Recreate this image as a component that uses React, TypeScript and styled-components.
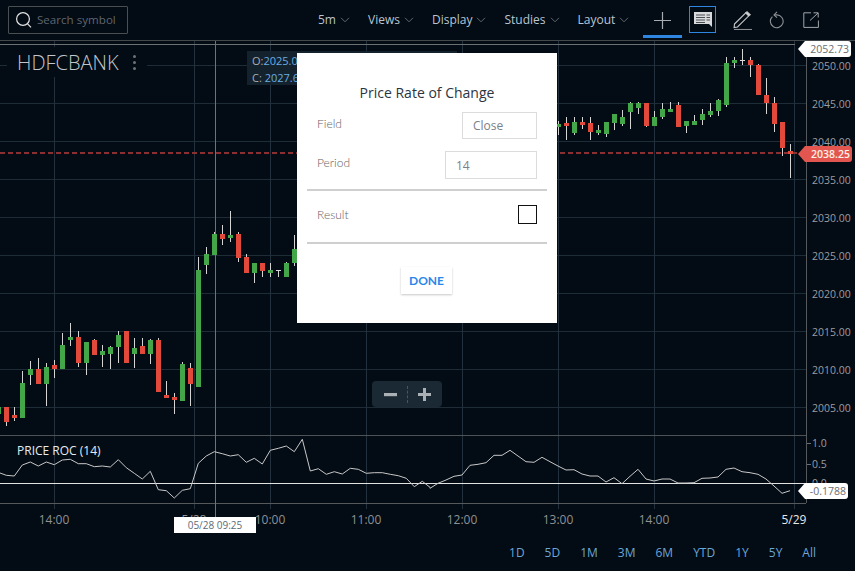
import React from "react";
import styled, { createGlobalStyle } from "styled-components";

const Global = createGlobalStyle`
  html, body { margin: 0; padding: 0; background: #030b14; overflow: hidden; }
  * { box-sizing: border-box; }
`;

const Page = styled.div`
  width: 855px;
  height: 571px;
  display: flex;
  flex-direction: column;
  background: #030b14;
  font-family: "Open Sans", "Liberation Sans", sans-serif;
`;

const Toolbar = styled.header`
  height: 40px;
  display: flex;
  align-items: center;
  padding-left: 8px;
  flex: none;
`;

const SearchBox = styled.div`
  width: 120px;
  height: 28px;
  margin-top: -1px;
  border: 1px solid #4a4f52;
  border-radius: 1px;
  display: flex;
  align-items: center;
  padding-left: 6px;
  gap: 4px;
  color: #5e6670;
  font-size: 11.6px;
`;

const Menu = styled.nav`
  margin-left: 190px;
  display: flex;
  align-items: center;
  gap: 18px;
  margin-top: -1px;
`;

const MenuItem = styled.div`
  display: flex;
  align-items: center;
  gap: 4px;
  font-size: 12px;
  color: #b9c6d2;
`;

const Tools = styled.div`
  margin-left: 14px;
  display: flex;
  align-items: center;
  height: 40px;
`;

const CrossTool = styled.div`
  width: 39px;
  height: 29px;
  margin-top: 6px;
  border-bottom: 3px solid #2e86e0;
  display: flex;
  align-items: center;
  justify-content: center;
  padding-bottom: 2px;
`;

const NoteTool = styled.div`
  width: 27px;
  height: 27px;
  margin: -1px 0 0 7px;
  border: 1px solid #2e86e0;
  display: flex;
  align-items: center;
  justify-content: center;
`;

const PlainTool = styled.div<{ $gap: number }>`
  margin-left: ${(p) => p.$gap}px;
  display: flex;
  align-items: center;
  justify-content: center;
`;

const ChartArea = styled.main`
  position: relative;
  height: 493px;
  flex: none;
  overflow: hidden;
`;

const ChartSvg = styled.svg`
  display: block;
  width: 855px;
  height: 493px;
`;

const AxisText = styled.text<{ $bright?: boolean }>`
  font-family: "Open Sans", "Liberation Sans", sans-serif;
  font-size: 10.5px;
  fill: ${(p) => (p.$bright ? "#e8e8e8" : "#9a9ea2")};
`;

const TimeText = styled.text<{ $bright?: boolean }>`
  font-family: "Open Sans", "Liberation Sans", sans-serif;
  font-size: 12px;
  text-anchor: middle;
  fill: ${(p) => (p.$bright ? "#e8e8e8" : "#8e9296")};
`;

const Symbol = styled.div`
  position: absolute;
  left: 7px;
  top: 7px;
  width: 140px;
  height: 30px;
  padding-left: 10px;
  background: #030b14;
  display: flex;
  align-items: center;
  gap: 14px;
  color: #c2c6ca;
  font-size: 20px;
  font-weight: 300;
`;

const Dots = styled.span`
  display: flex;
  flex-direction: column;
  gap: 3px;
  & i {
    display: block;
    width: 3px;
    height: 3px;
    border-radius: 50%;
    background: #6d7276;
  }
`;

const Study = styled.div`
  position: absolute;
  left: 17px;
  top: 402px;
  font-size: 12px;
  color: #e6ecf2;
`;

const Ohlc = styled.div`
  position: absolute;
  left: 247px;
  top: 11px;
  width: 210px;
  height: 34px;
  padding: 1px 0 0 5px;
  background: #14222e;
  font-size: 11px;
  line-height: 17px;
  color: #a6adb4;
`;

const OhlcValue = styled.span`
  color: #68aee4;
`;

const Flag = styled.div<{ $top: number; $width: number; $red?: boolean }>`
  position: absolute;
  left: 805px;
  top: ${(p) => p.$top}px;
  width: ${(p) => p.$width}px;
  height: 16px;
  border-radius: 0 3px 3px 0;
  background: ${(p) => (p.$red ? "#e2564f" : "#ffffff")};
  color: ${(p) => (p.$red ? "#fdf2e8" : "#6a6e72")};
  font-size: 10.5px;
  font-weight: ${(p) => (p.$red ? 600 : 400)};
  line-height: 17px;
  text-align: right;
  padding-right: 2px;
  &::before {
    content: "";
    position: absolute;
    left: -7px;
    top: 0;
    border-style: solid;
    border-width: 8px 7px 8px 0;
    border-color: transparent ${(p) => (p.$red ? "#e2564f" : "#ffffff")} transparent transparent;
  }
`;

const ZoomControl = styled.div`
  position: absolute;
  left: 372px;
  top: 341px;
  width: 70px;
  height: 26px;
  background: #1a2934;
  border-radius: 4px;
  display: flex;
  align-items: center;
  justify-content: center;
  gap: 10px;
`;

const ZoomDivider = styled.span`
  width: 0;
  height: 17px;
  border-left: 1px dashed #4a555e;
`;

const DateTip = styled.div`
  position: absolute;
  left: 174px;
  top: 477px;
  width: 82px;
  height: 16px;
  background: #fff;
  color: #5d6a78;
  font-size: 10px;
  line-height: 16px;
  text-align: center;
`;

const Modal = styled.section`
  position: absolute;
  left: 297px;
  top: 13px;
  width: 260px;
  height: 270px;
  background: #fff;
  padding: 30px 10px 0;
  display: flex;
  flex-direction: column;
`;

const ModalTitle = styled.h2`
  margin: 0;
  font-size: 14px;
  font-weight: 400;
  line-height: 20px;
  color: #2b3440;
  text-align: center;
`;

const Row = styled.div<{ $h: number; $top?: number }>`
  height: ${(p) => p.$h}px;
  margin-top: ${(p) => p.$top ?? 0}px;
  padding: 0 10px;
  display: flex;
  align-items: center;
  justify-content: space-between;
`;

const Label = styled.label<{ $lift?: number }>`
  font-family: Lato, "Open Sans", sans-serif;
  font-size: 12px;
  font-weight: 300;
  color: #5f6366;
  margin-top: -${(p) => p.$lift ?? 4}px;
`;

const FieldBox = styled.div<{ $w: number }>`
  width: ${(p) => p.$w}px;
  height: 100%;
  border: 1px solid #dcdcdc;
  padding-left: 10px;
  display: flex;
  align-items: center;
  font-size: 12px;
  color: #7c8088;
`;

const Divider = styled.hr<{ $top?: number }>`
  width: 100%;
  height: 2px;
  margin: ${(p) => p.$top ?? 0}px 0 0;
  border: 0;
  background: #cfcfcf;
  flex: none;
`;

const CheckBox = styled.span`
  width: 19px;
  height: 19px;
  border: 1px solid #111;
  margin-top: -4px;
`;

const DoneButton = styled.button`
  align-self: center;
  width: 51px;
  height: 27px;
  margin: 23px 0 0 -1px;
  padding: 0;
  background: #fff;
  border: 0;
  box-shadow: 0 1px 2px rgba(0, 0, 0, 0.22);
  color: #2a86ea;
  font-family: Lato, "Open Sans", sans-serif;
  font-weight: 700;
  font-size: 12px;
`;

const RangeBar = styled.footer`
  height: 38px;
  flex: none;
  display: flex;
  align-items: center;
  justify-content: flex-end;
  gap: 20px;
  padding-right: 39px;
  font-size: 12px;
  color: #6ba6d6;
`;

type C = [number, number, number, number, number, "g" | "r" | "d"];

const leftCandles: C[] = [
  [-5, 621, 641, 621, 641, "g"], [19, 621, 678, 621, 665, "r"], [43, 621, 663, 645, 654, "r"],
  [67, 513, 654, 549, 654, "g"], [91, 483, 555, 507, 525, "g"], [115, 474, 552, 507, 552, "r"],
  [139, 489, 618, 501, 552, "g"], [163, 480, 534, 495, 507, "r"], [187, 399, 507, 435, 507, "g"],
  [211, 369, 438, 411, 420, "g"], [235, 393, 501, 411, 489, "r"], [259, 426, 525, 426, 489, "g"],
  [283, 417, 465, 420, 465, "r"], [307, 435, 501, 453, 465, "g"], [331, 438, 507, 441, 462, "g"],
  [355, 393, 489, 405, 441, "g"], [379, 393, 489, 393, 489, "r"], [403, 414, 504, 444, 462, "g"],
  [427, 414, 462, 438, 462, "r"], [451, 417, 492, 420, 462, "g"], [475, 414, 576, 420, 576, "r"],
  [499, 543, 594, 585, 594, "r"], [523, 579, 642, 591, 600, "r"], [547, 486, 603, 492, 603, "g"],
  [571, 489, 618, 504, 552, "r"], [595, 171, 561, 210, 561, "g"], [619, 141, 222, 162, 195, "g"],
  [643, 96, 165, 102, 165, "g"], [667, 75, 135, 102, 117, "r"], [691, 33, 126, 105, 114, "g"],
  [715, 96, 186, 102, 174, "r"], [739, 162, 219, 171, 219, "r"], [763, 189, 249, 189, 219, "g"],
  [787, 189, 231, 189, 213, "r"], [811, 189, 231, 210, 219, "g"], [835, 210, 231, 210, 213, "d"],
  [859, 186, 231, 189, 231, "g"], [883, 105, 198, 147, 189, "g"],
];

const rightCandles: C[] = [
  [12, 243, 285, 252, 261, "g"], [35, 231, 300, 249, 258, "r"], [59, 231, 285, 246, 279, "g"],
  [83, 231, 267, 246, 255, "r"], [107, 231, 300, 249, 276, "r"], [131, 255, 285, 270, 279, "g"],
  [155, 246, 291, 246, 282, "g"], [179, 222, 270, 222, 249, "g"], [203, 210, 258, 231, 252, "g"],
  [227, 186, 267, 189, 216, "g"], [251, 186, 222, 189, 204, "g"], [275, 189, 261, 189, 258, "r"],
  [299, 213, 258, 231, 258, "g"], [323, 189, 237, 207, 231, "g"], [347, 186, 216, 207, 216, "g"],
  [371, 186, 261, 195, 261, "r"], [395, 243, 279, 243, 258, "g"], [419, 225, 255, 243, 255, "g"],
  [443, 207, 255, 222, 240, "g"], [467, 189, 231, 213, 225, "g"], [491, 177, 228, 180, 213, "g"],
  [515, 51, 201, 69, 195, "g"], [539, 51, 84, 60, 69, "g"], [563, 27, 75, 60, 63, "d"],
  [587, 51, 111, 60, 75, "r"], [611, 72, 165, 75, 165, "r"], [635, 114, 222, 165, 189, "r"],
  [659, 171, 276, 189, 252, "r"], [683, 246, 348, 246, 324, "r"], [707, 312, 414, 333, 342, "r"],
];

const roc6 = [[0,129],[19,136],[43,138],[67,105],[91,96],[115,108],[139,96],[163,104],[187,90],[211,88],[235,101],[259,101],[283,110],[307,108],[331,111],[355,89],[379,113],[403,130],[427,147],[451,124],[475,179],[499,182],[523,204],[547,181],[571,176],[595,100],[619,78],[643,65],[667,71],[691,78],[715,74],[739,97],[763,85],[787,102],[811,61],[835,55],[859,48],[883,65],[907,28],[931,123],[955,116],[979,133],[1003,125],[1027,132],[1051,115],[1075,118],[1099,130],[1123,128],[1147,128],[1171,133],[1195,137],[1219,145],[1243,170],[1267,154],[1290,172]];
const roc7 = [[0,175],[24,160],[48,150],[72,139],[96,135],[120,106],[144,103],[168,98],[192,76],[216,76],[240,61],[264,78],[288,95],[312,97],[336,82],[360,95],[384,108],[408,120],[432,119],[456,132],[480,138],[504,138],[528,156],[552,143],[576,161],[600,139],[624,118],[648,147],[672,153],[696,147],[720,147],[744,159],[768,159],[792,158],[816,145],[840,144],[864,141],[888,118],[912,114],[936,125],[960,128],[984,133],[1008,147],[1032,168],[1056,190],[1080,182]];
const rocPoints = [
  ...roc6.map(([x, y]) => `${(x / 3).toFixed(1)},${(430 + y / 3).toFixed(1)}`),
  ...roc7.map(([x, y]) => `${(430 + x / 3).toFixed(1)},${(430 + y / 3).toFixed(1)}`),
].join(" ");

const hGrid = [65, 103, 141, 179, 217, 255, 293, 331, 369, 407];
const vGrid = [54, 194, 270, 366, 462, 558, 654, 794];
const prices = ["2050.00", "2045.00", "2040.00", "2035.00", "2030.00", "2025.00", "2020.00", "2015.00", "2010.00", "2005.00"];
const times: [number, string, boolean?][] = [[54, "14:00"], [194, "5/28"], [270, "10:00"], [366, "11:00"], [462, "12:00"], [558, "13:00"], [654, "14:00"], [794, "5/29", true]];
const ranges = ["1D", "5D", "1M", "3M", "6M", "YTD", "1Y", "5Y", "All"];

const GREEN = "#43a749";
const RED = "#e2493a";

function Candle({ c, ox, oy }: { c: C; ox: number; oy: number }) {
  const [zx, wt, wb, bt, bb, kind] = c;
  const i = Math.round((ox + zx / 3 - 6.33) / 8);
  const y = (v: number) => Math.round(oy + v / 3);
  const fill = kind === "g" ? GREEN : kind === "r" ? RED : "#d8d8d8";
  return (
    <g shapeRendering="crispEdges">
      <rect x={6 + 8 * i} y={y(wt)} width={1} height={y(wb) - y(wt)} fill="#d4d4d4" />
      <rect x={4 + 8 * i} y={y(bt)} width={5} height={Math.max(1, y(bb) - y(bt))} fill={fill} />
    </g>
  );
}

function Chevron() {
  return (
    <svg width="10" height="6" viewBox="0 0 10 6" fill="none" stroke="#5f6870" strokeWidth="1">
      <path d="M1 .8 5 4.8 9 .8" />
    </svg>
  );
}

export default function App() {
  return (
    <Page>
      <Global />
      <Toolbar>
        <SearchBox>
          <svg width="18" height="18" viewBox="0 0 18 18" fill="none" stroke="#e4e4e4" strokeWidth="1.2">
            <circle cx="8" cy="8" r="6.4" />
            <path d="M12.6 12.8 16 16.4" />
          </svg>
          Search symbol
        </SearchBox>
        <Menu>
          {["5m", "Views", "Display", "Studies", "Layout"].map((m) => (
            <MenuItem key={m}>
              {m}
              <Chevron />
            </MenuItem>
          ))}
        </Menu>
        <Tools>
          <CrossTool>
            <svg width="17" height="17" viewBox="0 0 17 17" stroke="#a8acb0" strokeWidth="1.2">
              <path d="M0 8.5h17M8.5 0v17" />
            </svg>
          </CrossTool>
          <NoteTool>
            <svg width="18" height="16" viewBox="0 0 18 16">
              <path d="M0 0h18v15l-3-3H0z" fill="#d8dadc" />
              <path d="M2 3h9M2 5.5h9M2 8h9M2 10.5h9M12.5 3h3.5M12.5 5.5h3.5M12.5 8h3.5" stroke="#4a4f54" strokeWidth="1" />
            </svg>
          </NoteTool>
          <PlainTool $gap={17}>
            <svg width="19" height="19" viewBox="0 0 19 19" fill="none" stroke="#c4c6c8" strokeWidth="1.1">
              <path d="M1.5 13 12.8 1.8l3 3L4.5 16l-3.4.6z" />
              <path d="M12.8 1.8 14 .8l3.2 3-1.4 1z" fill="#d8d8d8" />
              <path d="M1 18.5h18" stroke="#8a8e92" />
            </svg>
          </PlainTool>
          <PlainTool $gap={17}>
            <svg width="15" height="18" viewBox="0 0 15 18" fill="none" stroke="#8e9296" strokeWidth="1.1">
              <path d="M3.4 5.6a6.4 6.4 0 1 0 4.4-1.7H5.6" />
              <path d="M8 .8 5 3.9 8 6.6" />
            </svg>
          </PlainTool>
          <PlainTool $gap={19}>
            <svg width="16" height="16" viewBox="0 0 16 16" fill="none" stroke="#a2a6aa" strokeWidth="1">
              <path d="M8 .8H.8v14.6h14.6V8.5" />
              <path d="M7 8.5 15 1M10.5 .8H15.2V5.5" />
            </svg>
          </PlainTool>
        </Tools>
      </Toolbar>

      <ChartArea>
        <ChartSvg viewBox="0 40 855 493">
          <g stroke="#1e2c38" strokeWidth="1" shapeRendering="crispEdges">
            {hGrid.map((y) => (
              <line key={y} x1="0" x2="806" y1={y + 0.5} y2={y + 0.5} />
            ))}
            {vGrid.map((x) => (
              <line key={x} x1={x + 0.5} x2={x + 0.5} y1="41" y2="509" stroke="#22313d" />
            ))}
          </g>
          <g shapeRendering="crispEdges" strokeWidth="1">
            <line x1="0" x2="855" y1="40.5" y2="40.5" stroke="#43484b" />
            <line x1="0" x2="795" y1="44.5" y2="44.5" stroke="#6c7073" />
            <line x1="0" x2="806" y1="435.5" y2="435.5" stroke="#4e5356" />
            <line x1="0" x2="806" y1="503.5" y2="503.5" stroke="#55595c" />
            <line x1="0" x2="855" y1="533.5" y2="533.5" stroke="#303437" />
            <line x1="806.5" x2="806.5" y1="41" y2="503" stroke="#55595c" />
            <line x1="215.5" x2="215.5" y1="41" y2="517" stroke="#6f7376" />
            <line x1="807" x2="811" y1="443.5" y2="443.5" stroke="#6c7073" />
            <line x1="807" x2="811" y1="464.5" y2="464.5" stroke="#6c7073" />
          </g>
          <path d="M0 153H800" fill="none" stroke="#8c2f30" strokeWidth="2" strokeDasharray="5 3" />
          {leftCandles.map((c, i) => (
            <Candle key={i} c={c} ox={0} oy={200} />
          ))}
          {rightCandles.map((c, i) => (
            <Candle key={i} c={c} ox={555} oy={40} />
          ))}
          <line x1="0" x2="806" y1="483.5" y2="483.5" stroke="#e2e2e2" shapeRendering="crispEdges" />
          <polyline points={rocPoints} fill="none" stroke="#c8c8c8" strokeWidth="1" />
          {prices.map((p, i) => (
            <AxisText key={p} x="812" y={hGrid[i] + 5}>
              {p}
            </AxisText>
          ))}
          <AxisText x="812" y="447">1.0</AxisText>
          <AxisText x="812" y="468">0.5</AxisText>
          <AxisText x="812" y="487">0.0</AxisText>
          {times.map(([x, t, b]) => (
            <TimeText key={t + x} x={x} y="524" $bright={b}>
              {t}
            </TimeText>
          ))}
        </ChartSvg>

        <Symbol>
          HDFCBANK
          <Dots>
            <i />
            <i />
            <i />
          </Dots>
        </Symbol>
        <Ohlc>
          <div>
            O:<OhlcValue>2025.05</OhlcValue>
          </div>
          <div>
            C: <OhlcValue>2027.60</OhlcValue>
          </div>
        </Ohlc>
        <Study>PRICE ROC (14)</Study>
        <Flag $top={1} $width={46}>2052.73</Flag>
        <Flag $top={106} $width={47} $red>2038.25</Flag>
        <Flag $top={443} $width={43}>-0.1788</Flag>
        <ZoomControl>
          <svg width="13" height="13" viewBox="0 0 13 13">
            <rect y="5" width="13" height="3.2" fill="#aab0b4" />
          </svg>
          <ZoomDivider />
          <svg width="13" height="13" viewBox="0 0 13 13">
            <path d="M0 5h5V0h3v5h5v3H8v5H5V8H0z" fill="#aab0b4" />
          </svg>
        </ZoomControl>
        <DateTip>05/28 09:25</DateTip>

        <Modal>
          <ModalTitle>Price Rate of Change</ModalTitle>
          <Row $h={27} $top={9}>
            <Label>Field</Label>
            <FieldBox $w={75}>Close</FieldBox>
          </Row>
          <Row $h={28} $top={12}>
            <Label $lift={6}>Period</Label>
            <FieldBox $w={92}>14</FieldBox>
          </Row>
          <Divider $top={10} />
          <Row $h={51}>
            <Label>Result</Label>
            <CheckBox />
          </Row>
          <Divider />
          <DoneButton>DONE</DoneButton>
        </Modal>
      </ChartArea>

      <RangeBar>
        {ranges.map((r) => (
          <span key={r}>{r}</span>
        ))}
      </RangeBar>
    </Page>
  );
}
